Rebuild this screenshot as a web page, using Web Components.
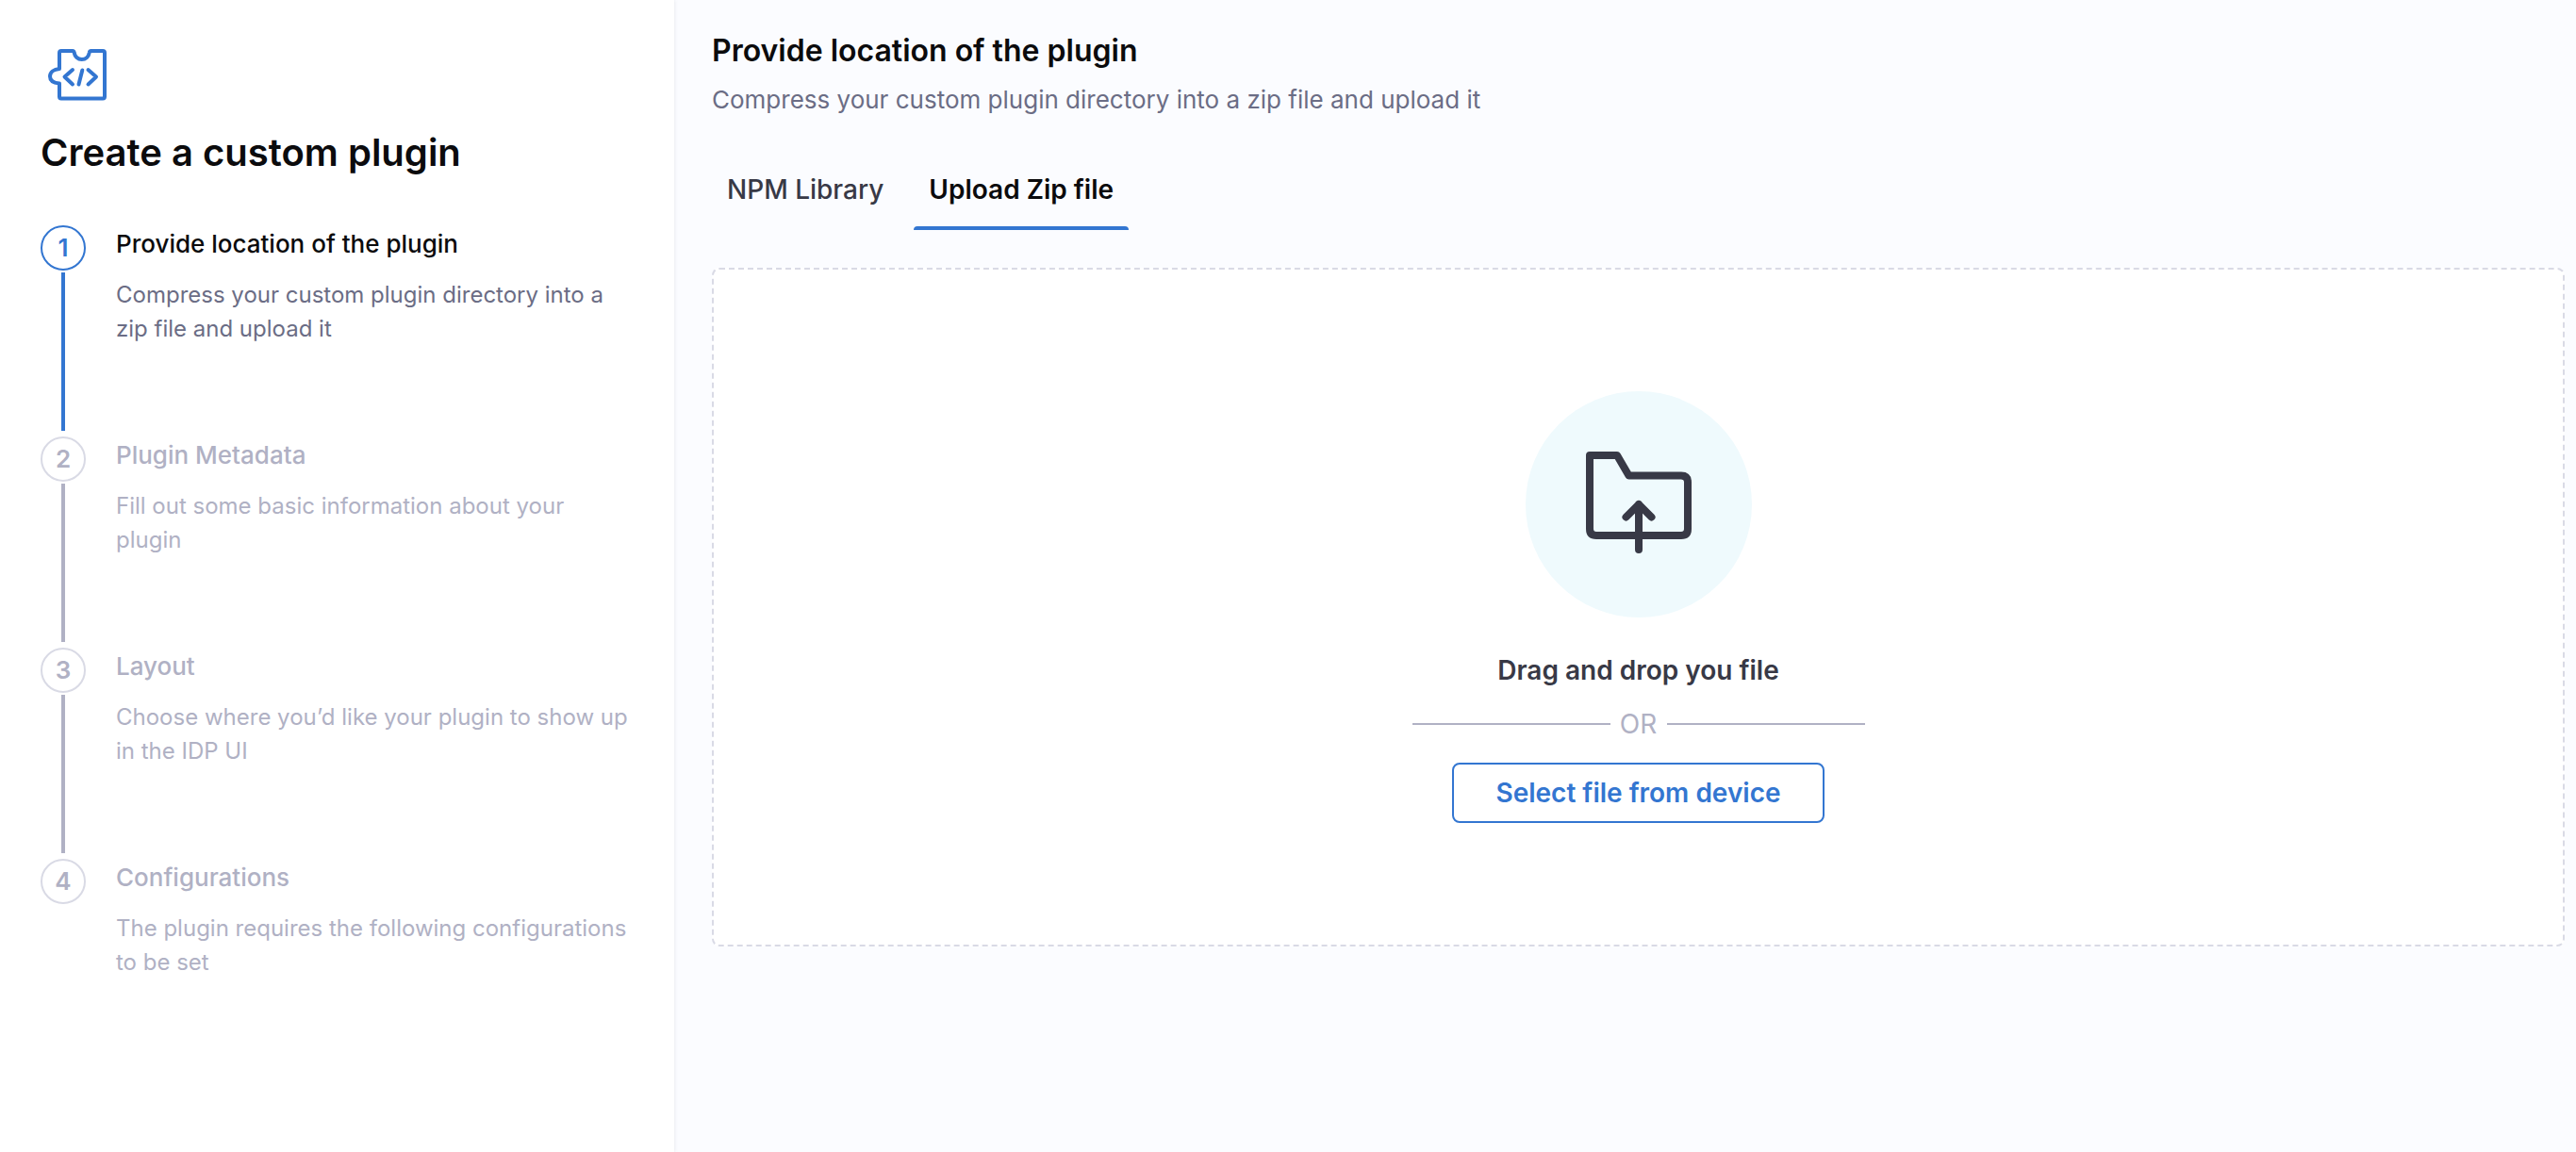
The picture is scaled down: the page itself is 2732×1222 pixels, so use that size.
<!DOCTYPE html>
<html lang="en">
<head>
<meta charset="utf-8">
<title>Create a custom plugin</title>
<style>
  html, body { height: 100%; }
  body { margin: 0; font-family: Inter, "Liberation Sans", sans-serif; color: #0b0b0d; background: #fbfcff; }
</style>
</head>
<body>
<plugin-wizard>
  <wizard-sidebar slot="sidebar" heading="Create a custom plugin">
    <wizard-step number="1" heading="Provide location of the plugin" active>Compress your custom plugin directory into a zip file and upload it</wizard-step>
    <wizard-step number="2" heading="Plugin Metadata">Fill out some basic information about your plugin</wizard-step>
    <wizard-step number="3" heading="Layout">Choose where you’d like your plugin to show up in the IDP UI</wizard-step>
    <wizard-step number="4" heading="Configurations">The plugin requires the following configurations to be set</wizard-step>
  </wizard-sidebar>
  <location-panel heading="Provide location of the plugin" note="Compress your custom plugin directory into a zip file and upload it">
    <tab-list slot="tabs">
      <tab-item>NPM Library</tab-item>
      <tab-item selected>Upload Zip file</tab-item>
    </tab-list>
    <file-drop-zone>
      <folder-upload-icon slot="icon"></folder-upload-icon>
      Drag and drop you file
      <or-divider slot="divider">OR</or-divider>
      <outline-button slot="action">Select file from device</outline-button>
    </file-drop-zone>
  </location-panel>
</plugin-wizard>

<script>
class BaseElement extends HTMLElement {
  connectedCallback() {
    if (this.shadowRoot) return;
    this.attachShadow({ mode: "open" }).innerHTML =
      "<style>*{box-sizing:border-box}</style>" + this.view();
  }
  view() { return ""; }
}

customElements.define("plugin-wizard", class extends BaseElement {
  view() {
    return `<style>
      :host { display: flex; min-height: 100%; --blue: #3376d1; --grey: #b0b1c4; --line: #d9dae5; --slate: #6b6d85; --ink: #383946; }
      main { flex: 1; min-width: 0; }
    </style>
    <slot name="sidebar"></slot><main><slot></slot></main>`;
  }
});

customElements.define("wizard-sidebar", class extends BaseElement {
  view() {
    return `<style>
      :host { display: block; box-sizing: border-box; flex: 0 0 715px; padding: 48px 43px 40px; background: #fff; box-shadow: 0 0 4px rgba(96,97,112,.16); position: relative; }
      plugin-icon { margin-left: 4px; }
      h1 { margin: 22px 0 49px; font-size: 40px; line-height: 56px; font-weight: 600; }
    </style>
    <aside>
      <plugin-icon></plugin-icon>
      <h1>${this.getAttribute("heading")}</h1>
      <div><slot></slot></div>
    </aside>`;
  }
});

customElements.define("plugin-icon", class extends BaseElement {
  view() {
    return `<style>:host { display: block; } svg { display: block; }</style>
    <svg width="72" height="64" viewBox="0 0 72 64" fill="none" stroke="#3376d1" stroke-width="4" stroke-linecap="round" stroke-linejoin="round" aria-hidden="true">
      <path d="M18 6Q16 6 16 8V25C10 25.500 6 28.500 6 33S10 40 16 40.500V54.500Q16 56.500 18 56.500H62Q64 56.500 64 54.500V8Q64 6 62 6H49.500Q48 6 47.700 8C47 12 44 15 39.700 15S32.500 12 31.700 8Q31.400 6 30 6Z"/>
      <path d="M30 26L21.500 33.500L30 41.500M40.300 26.500L36.500 41.500M46.500 26L55 33.500L46.500 41.500"/>
    </svg>`;
  }
});

customElements.define("wizard-step", class extends BaseElement {
  view() {
    return `<style>
      :host { display: flex; gap: 32px; min-height: 224px; color: var(--grey); }
      :host(:last-child) .track::after { display: none; }
      .track { display: flex; flex-direction: column; align-items: center; gap: 2px; padding-bottom: 6px; }
      .track::after { content: ""; flex: 1; width: 4px; background: var(--grey); }
      .num { width: 48px; height: 48px; border: 2px solid var(--line); border-radius: 50%; display: flex; align-items: center; justify-content: center; font-size: 26px; line-height: 32px; font-weight: 600; }
      .body { flex: 1; }
      h2 { margin: 4px 0 20px; font-size: 26px; line-height: 32px; font-weight: 500; }
      p { margin: 0; font-size: 24px; line-height: 36px; }
      :host([active]) .track::after { background: var(--blue); }
      :host([active]) .num { color: var(--blue); border-color: var(--blue); }
      :host([active]) h2 { color: #0b0b0d; }
      :host([active]) p { color: var(--slate); }
    </style>
    <div class="track"><span class="num">${this.getAttribute("number")}</span></div>
    <div class="body"><h2>${this.getAttribute("heading")}</h2><p><slot></slot></p></div>`;
  }
});

customElements.define("location-panel", class extends BaseElement {
  view() {
    return `<style>
      :host { display: block; padding: 32px 12px 32px 40px; }
      h2 { margin: 0; font-size: 32px; line-height: 44px; font-weight: 600; }
      p { margin: 12px 0 0; font-size: 26px; line-height: 36px; color: var(--slate); }
      .tabs { margin: 44px 0 40px; }
    </style>
    <h2>${this.getAttribute("heading")}</h2>
    <p>${this.getAttribute("note")}</p>
    <div class="tabs"><slot name="tabs"></slot></div>
    <slot></slot>`;
  }
});

customElements.define("tab-list", class extends BaseElement {
  view() {
    return `<style>:host { display: flex; gap: 16px; }</style><slot></slot>`;
  }
});

customElements.define("tab-item", class extends BaseElement {
  view() {
    return `<style>
      :host { display: block; }
      button { display: block; border: 0; background: none; font: 500 28px/38px Inter, sans-serif; color: var(--ink); padding: 14px 0 0; cursor: pointer; }
      span { display: block; padding: 0 16px 20px; }
      button::after { content: ""; display: block; height: 4px; border-radius: 4px 4px 0 0; }
      :host([selected]) button { color: #0b0b0d; font-weight: 600; }
      :host([selected]) button::after { background: var(--blue); }
    </style>
    <button type="button"><span><slot></slot></span></button>`;
  }
});

customElements.define("file-drop-zone", class extends BaseElement {
  view() {
    return `<style>
      :host { display: flex; flex-direction: column; align-items: center; justify-content: center; box-sizing: border-box; min-height: 720px; background: #fff; border: 2px dashed var(--line); border-radius: 8px; }
      p { margin: 36px 0 18px; font-size: 28px; line-height: 40px; font-weight: 600; color: var(--ink); }
      .action { margin-top: 22px; }
    </style>
    <slot name="icon"></slot>
    <p><slot></slot></p>
    <slot name="divider"></slot>
    <div class="action"><slot name="action"></slot></div>`;
  }
});

customElements.define("folder-upload-icon", class extends BaseElement {
  view() {
    return `<style>
      :host { display: flex; align-items: center; justify-content: center; width: 240px; height: 240px; border-radius: 50%; background: #effafd; }
      svg { display: block; }
    </style>
    <svg width="128" height="128" viewBox="0 0 128 128" fill="none" stroke="#383946" stroke-width="8" stroke-linecap="round" stroke-linejoin="round" aria-hidden="true">
      <path d="M12 12H41L53.500 33.500H109Q116 33.500 116 40.500V90Q116 97 109 97H19Q12 97 12 90Z"/>
      <path d="M64 112V64M50.500 77.500L64 64L77.500 77.500"/>
    </svg>`;
  }
});

customElements.define("or-divider", class extends BaseElement {
  view() {
    return `<style>
      :host { display: flex; align-items: center; width: 480px; height: 38px; font-size: 28px; line-height: 38px; color: var(--grey); }
      i { flex: 1; height: 2px; background: var(--grey); }
      span { width: 60px; text-align: center; }
    </style>
    <i></i><span><slot></slot></span><i></i>`;
  }
});

customElements.define("outline-button", class extends BaseElement {
  view() {
    return `<style>
      :host { display: block; }
      button { display: block; height: 64px; padding: 0 44px; border: 2px solid var(--blue); border-radius: 8px; background: #fff; color: var(--blue); font: 600 28px/36px Inter, sans-serif; cursor: pointer; }
    </style>
    <button type="button"><slot></slot></button>`;
  }
});
</script>
</body>
</html>
